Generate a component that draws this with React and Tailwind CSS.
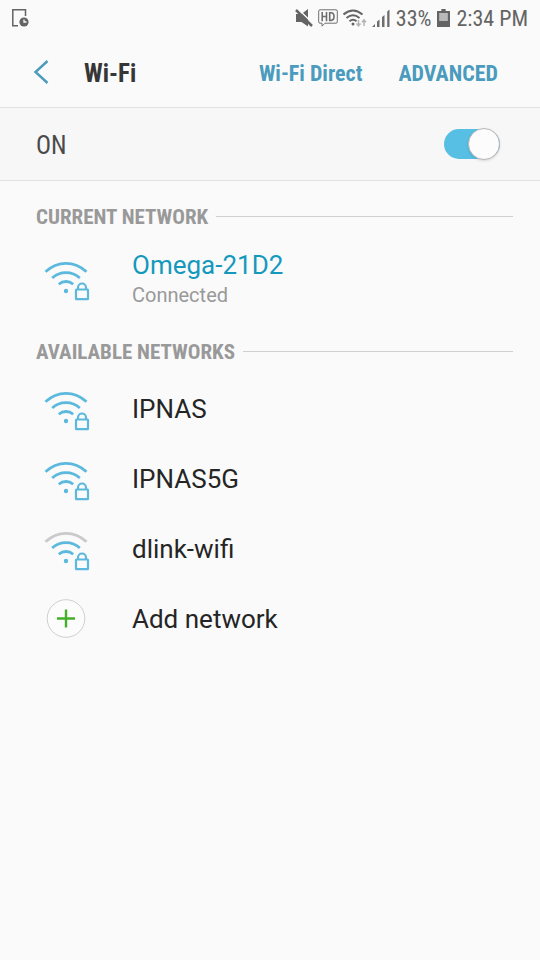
import React, { useState } from 'react';

const condensed = "font-['Roboto_Condensed','Roboto',sans-serif]";

const StatusIcons = () => (
  <div className="flex items-center gap-[5px]">
    {/* Muted */}
    <svg width="18" height="18" viewBox="0 0 18 18" fill="#646464" aria-hidden="true">
      <path d="M1 5h5.500L13 0v17.500L6.500 13H1z" />
      <path d="M3 0 18 14.500" stroke="#fafafa" strokeWidth="1.500" />
      <path d="M1 1 17 17" stroke="#646464" strokeWidth="2.500" />
    </svg>
    {/* HD */}
    <svg width="20" height="18" viewBox="0 0 20 18" fill="none" stroke="#6e6e6e" aria-hidden="true">
      <path d="M2 .8h16a1.300 1.300 0 0 1 1.300 1.300v10.800a1.300 1.300 0 0 1-1.300 1.300H7l-3 3v-3H2A1.300 1.300 0 0 1 .7 12.900V2.100A1.300 1.300 0 0 1 2 .8z" />
      <path d="M4.200 3v9.200M4.200 7.500h4.300M8.500 3v9.200M11.700 3.800v7.600h1.300c2.200 0 3-1.600 3-3.800s-.8-3.800-3-3.800z" strokeWidth="1.600" />
    </svg>
    {/* Wi-Fi with traffic arrows */}
    <svg width="24" height="19" viewBox="0 0 24 19" fill="none" stroke="#646464" strokeWidth="2" aria-hidden="true">
      <path d="M0.500 5.500Q10 -2.500 19.500 5.500M3.500 9Q10 3.500 16.500 9M6.500 12.300Q10 9.300 13.500 12.300" />
      <circle cx="10" cy="15" r="1.500" fill="#646464" stroke="none" />
      <path d="M15.500 11v6M13.500 14.500l2 2.300 2-2.300M21 17v-6M19 13.300l2-2.300 2 2.300" stroke="#b4b4b4" strokeWidth="1.500" />
    </svg>
    {/* Signal */}
    <svg width="18" height="19" viewBox="1 0 18 19" fill="#6e6e6e" aria-hidden="true">
      <path d="M1 18l3-3v3zM6 12.500l2.500-2V18H6zM11 8l2.500-2v12H11zM16.200 2.500l2.300-2V18h-2.300z" />
    </svg>
  </div>
);

const WifiIcon = ({ weak }) => (
  <svg className="mt-1" width="46" height="40" viewBox="0 0 46 40" fill="none" stroke="#5cb9dd" strokeWidth="2.800" aria-hidden="true">
    <path d="M1.500 10.800Q10.500 2.300 22 2.300T42.500 10.800" stroke={weak ? '#cacaca' : '#5cb9dd'} />
    <path d="M8.200 17Q14 11.600 22 11.600T35.800 17" />
    <path d="M14.800 23.200Q18 20.500 22 20.500T29.200 23.200" />
    <circle cx="22" cy="30" r="2.200" fill="#5cb9dd" stroke="none" />
    <rect x="32" y="28.500" width="12" height="9.700" rx="0.500" strokeWidth="2.200" />
    <path d="M34 28.500v-2a4 4 0 0 1 8 0v2" strokeWidth="2.200" />
  </svg>
);

const SectionTitle = ({ children }) => (
  <div className="flex items-center gap-2 pl-9 pr-[27px]">
    <h2 className={`${condensed} text-[21px] leading-8 font-bold text-[#999999]`}>{children}</h2>
    <div className="mb-[2px] h-px flex-1 bg-[#d0d0d0]" />
  </div>
);

const NetworkRow = ({ icon, name }) => (
  <button type="button" className="flex h-[70px] w-full items-center pl-11 text-left">
    <span className="w-[88px]">{icon}</span>
    <span className="text-[26px] leading-8 text-[#252525]">{name}</span>
  </button>
);

const App = () => {
  const [enabled, setEnabled] = useState(true);

  return (
    <div className="min-h-screen bg-[#fafafa] font-['Roboto',sans-serif]">
      {/* Status bar */}
      <div className={`${condensed} flex h-9 items-center px-3 text-[22px] leading-8 text-[#646464]`}>
        <svg width="18" height="20" viewBox="0 0 18 20" fill="none" stroke="#646464" strokeWidth="1.500" aria-hidden="true">
          <path d="M13.500 8V1.800H.8v15.900H6" />
          <circle cx="12" cy="14" r="4.600" fill="#646464" stroke="none" />
          <path d="M12 11.500V14h2.500" stroke="#fafafa" strokeWidth="1.300" />
        </svg>
        <div className="ml-auto flex items-center gap-[6px]">
          <StatusIcons />
          <span className="pt-[2px]">33%</span>
          <svg width="13" height="18" viewBox="0 0 12 18" preserveAspectRatio="none" aria-hidden="true">
            <path d="M4 0h4v2h4v16H0V2h4z" fill="#646464" />
            <path d="M2 4h8v8H2z" fill="#b9b9b9" />
          </svg>
          <span className="pt-[2px]">2:34 PM</span>
        </div>
      </div>

      {/* Header */}
      <header className={`${condensed} flex h-18 items-center border-b border-[#e2e2e2] pl-[33px] pr-[42px] text-[22px] leading-8 font-bold`}>
        <button type="button" aria-label="Back" className="mr-[35px]">
          <svg width="16" height="24" viewBox="0 0 16 24" fill="none" stroke="#4a9bbd" strokeWidth="2.400" aria-hidden="true">
            <path d="M14.500 1 2.500 12l12 11" />
          </svg>
        </button>
        <h1 className="pt-1 text-[25px] text-[#363636]">Wi-Fi</h1>
        <nav className="ml-auto flex gap-9 pt-1 text-[#4a9bbd]">
          <a href="#direct">Wi-Fi Direct</a>
          <a href="#advanced">ADVANCED</a>
        </nav>
      </header>

      {/* Master switch */}
      <label className="flex h-[73px] items-center justify-between border-b border-[#e2e2e2] bg-[#f7f7f7] pl-9 pr-10">
        <span className={`${condensed} pt-1 text-[25px] leading-8 text-[#4a4a4a]`}>ON</span>
        <input
          type="checkbox"
          role="switch"
          checked={enabled}
          onChange={(e) => setEnabled(e.target.checked)}
          className="relative h-[30px] w-14 appearance-none rounded-full bg-[#c8c8c8] before:absolute before:-top-px before:left-0 before:size-8 before:rounded-full before:border before:border-[#b8b8b8] before:bg-[#fcfcfc] before:shadow-sm checked:bg-[#57bfe3] checked:before:left-6"
        />
      </label>

      <main>
        <section className="pt-5">
          <SectionTitle>CURRENT NETWORK</SectionTitle>
          <button type="button" className="flex h-[91px] w-full items-center pl-11 text-left">
            <span className="w-[88px]"><WifiIcon /></span>
            <span className="flex flex-col">
              <span className="text-[26px] leading-8 text-[#1499bd]">Omega-21D2</span>
              <span className="text-xl leading-7 text-[#999999]">Connected</span>
            </span>
          </button>
        </section>

        <section className="pt-3">
          <SectionTitle>AVAILABLE NETWORKS</SectionTitle>
          <div className="pt-[6px]">
            <NetworkRow icon={<WifiIcon />} name="IPNAS" />
            <NetworkRow icon={<WifiIcon />} name="IPNAS5G" />
            <NetworkRow icon={<WifiIcon weak />} name="dlink-wifi" />
            <NetworkRow
              icon={
                <svg width="44" height="40" viewBox="0 0 44 40" fill="none" aria-hidden="true">
                  <circle cx="22" cy="19.500" r="18.800" fill="#fcfcfc" stroke="#cfcfcf" />
                  <path d="M13 19.500h18M22 10.500v18" stroke="#43b02a" strokeWidth="2.400" />
                </svg>
              }
              name="Add network"
            />
          </div>
        </section>
      </main>
    </div>
  );
};

export default App;
